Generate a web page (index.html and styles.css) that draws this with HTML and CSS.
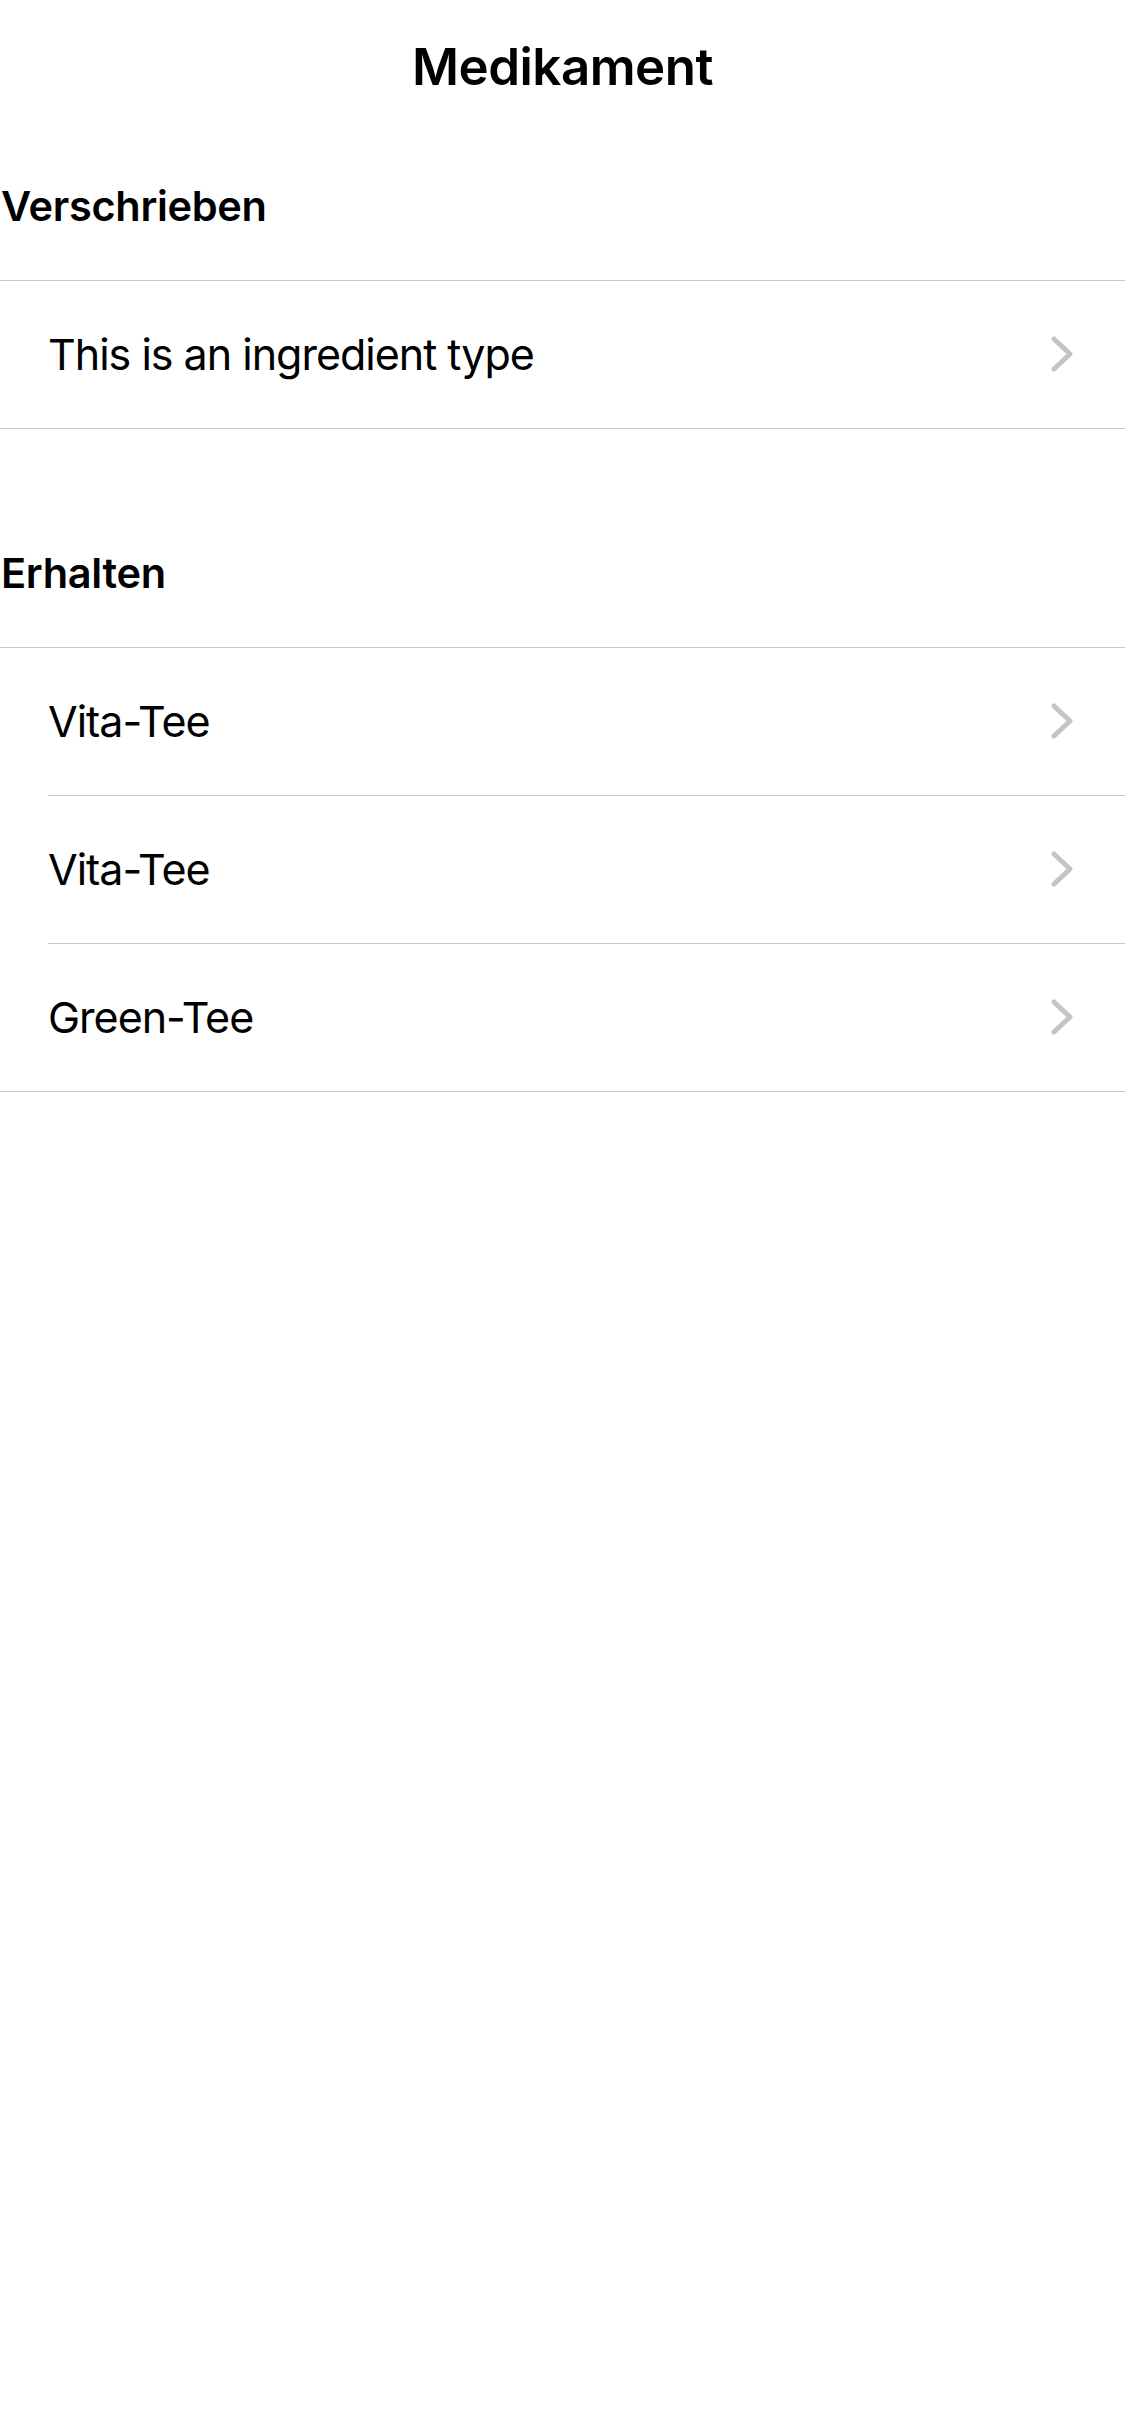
FILE: index.html
```html
<!DOCTYPE html>
<html lang="de">
<head>
<meta charset="utf-8">
<title>Medikament</title>
<link rel="stylesheet" href="styles.css">
</head>
<body>
<div class="screen">
  <header class="navbar"><h1 class="title">Medikament</h1></header>

  <section class="section">
    <h2 class="section-header">Verschrieben</h2>
    <ul class="list">
      <li class="row"><div class="row-inner"><span class="row-label">This is an ingredient type</span>
        <svg class="chevron" viewBox="0 0 24 36"><path d="M3 3 L19 18 L3 33"/></svg></div></li>
    </ul>
  </section>

  <section class="section section-second">
    <h2 class="section-header">Erhalten</h2>
    <ul class="list">
      <li class="row"><div class="row-inner"><span class="row-label">Vita-Tee</span>
        <svg class="chevron" viewBox="0 0 24 36"><path d="M3 3 L19 18 L3 33"/></svg></div></li>
      <li class="row"><div class="row-inner"><span class="row-label">Vita-Tee</span>
        <svg class="chevron" viewBox="0 0 24 36"><path d="M3 3 L19 18 L3 33"/></svg></div></li>
      <li class="row"><div class="row-inner"><span class="row-label">Green-Tee</span>
        <svg class="chevron" viewBox="0 0 24 36"><path d="M3 3 L19 18 L3 33"/></svg></div></li>
    </ul>
  </section>
</div>
</body>
</html>
```

FILE: styles.css
```css
html, body {
  margin: 0;
  padding: 0;
  background: #ffffff;
}
body {
  font-family: Inter, "Noto Sans", "Liberation Sans", sans-serif;
  color: #000000;
  width: 1125px;
  min-height: 2436px;
}
.screen {
  display: flex;
  flex-direction: column;
}
.navbar {
  height: 132px;
  display: flex;
  align-items: center;
  justify-content: center;
}
.title {
  margin: 0;
  font-size: 51px;
  font-weight: 600;
  letter-spacing: -0.5px;
}
.section {
  display: flex;
  flex-direction: column;
}
.section-second {
  margin-top: 70px;
}
.section-header {
  margin: 0;
  height: 148px;
  display: flex;
  align-items: center;
  padding-left: 1px;
  font-size: 41.5px;
  font-weight: 600;
  letter-spacing: -0.3px;
}
.list {
  list-style: none;
  margin: 0;
  padding: 0;
  border-top: 1px solid #c8c7cc;
  border-bottom: 1px solid #c8c7cc;
}
.row {
  padding-left: 48px;
}
.row-inner {
  height: 147px;
  display: flex;
  align-items: center;
  padding-right: 50px;
  padding-bottom: 2px;
  box-sizing: border-box;
}
.row + .row .row-inner {
  border-top: 1px solid #c8c7cc;
  height: 148px;
}
.row-label {
  flex: 1;
  font-size: 43px;
  font-weight: 400;
  letter-spacing: -1px;
}
.chevron {
  width: 24px;
  height: 36px;
  fill: none;
  stroke: #c4c4c7;
  stroke-width: 5;
  stroke-linecap: round;
  stroke-linejoin: round;
}
```
